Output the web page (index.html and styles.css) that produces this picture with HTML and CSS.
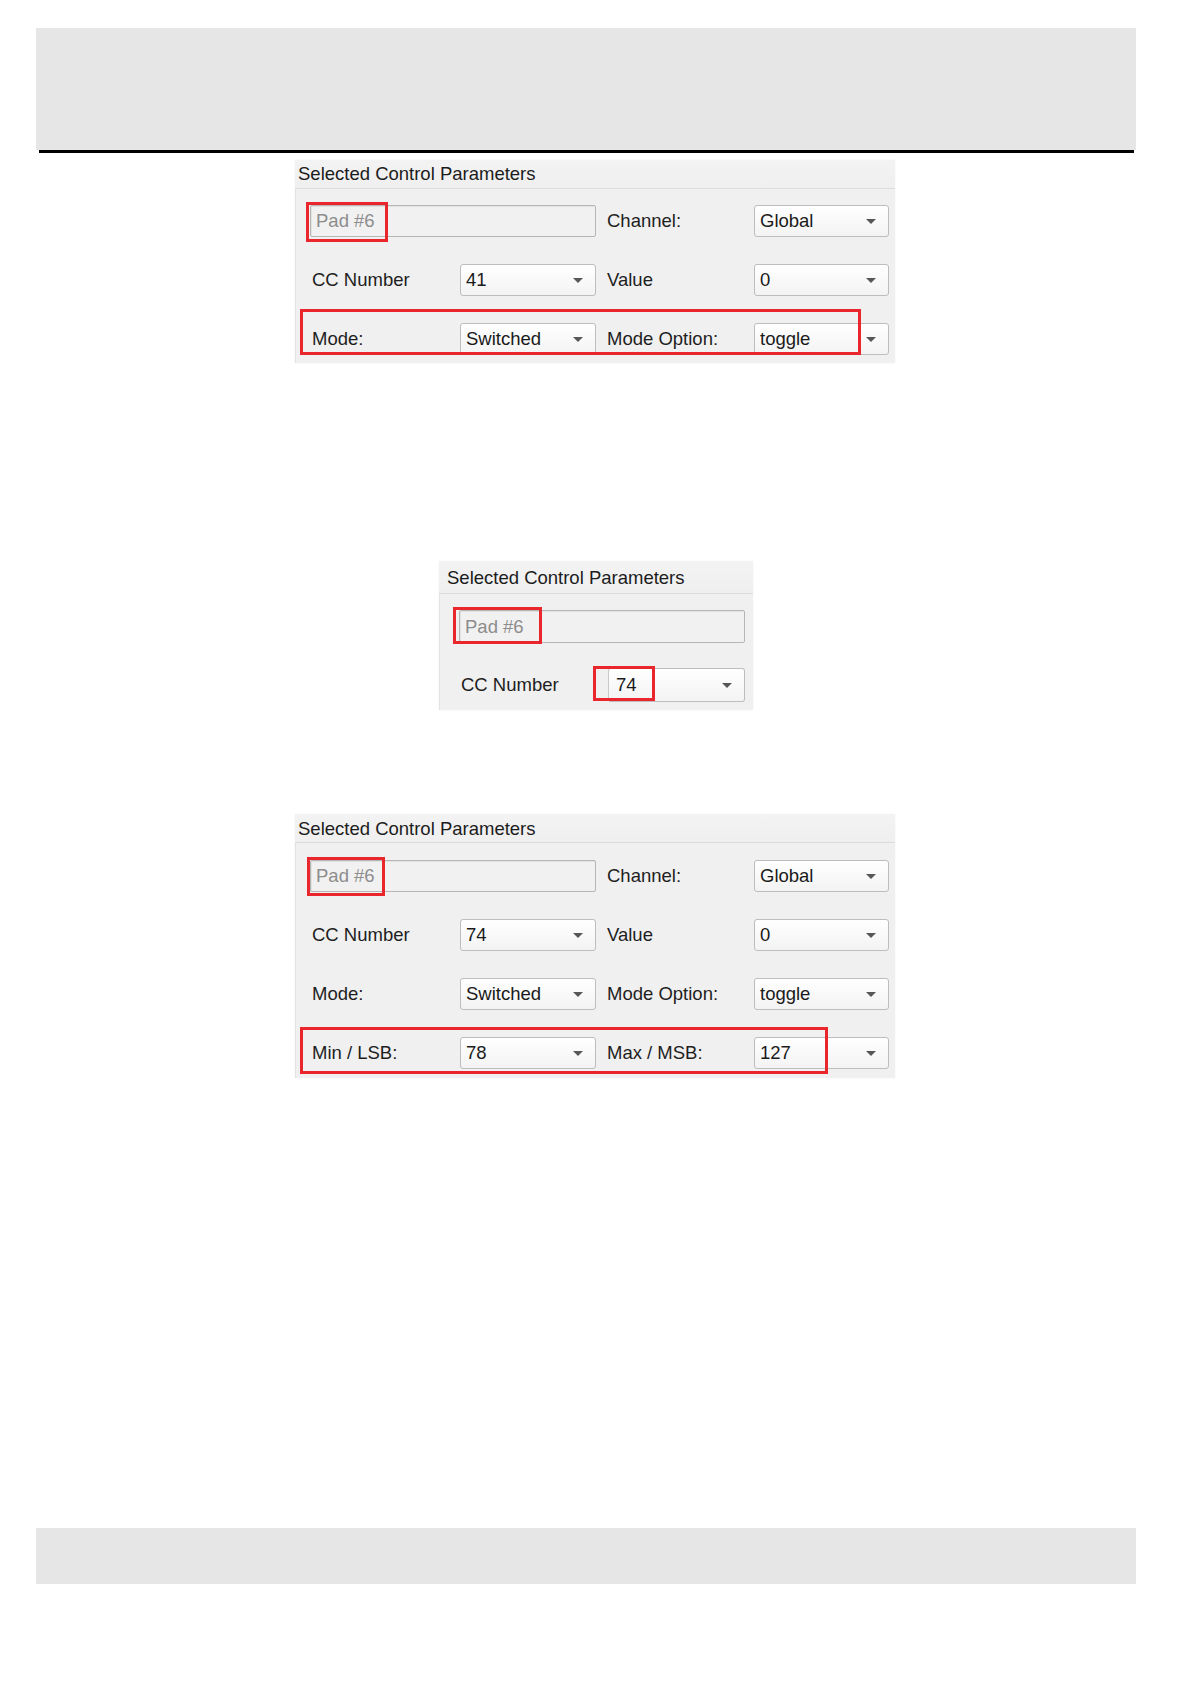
FILE: index.html
```html
<!DOCTYPE html>
<html lang="en">
<head>
<meta charset="utf-8">
<title>Selected Control Parameters</title>
<link rel="stylesheet" href="styles.css">
</head>
<body>
<div class="page">
  <div class="top-band"></div>
  <div class="rule"></div>

  <section class="panel panel-wide p1">
    <div class="panel-title">Selected Control Parameters</div>
    <div class="panel-body grid4">
      <div class="field span2">Pad #6</div>
      <div class="lbl">Channel:</div>
      <div class="select"><span>Global</span><i class="arrow"></i></div>

      <div class="lbl">CC Number</div>
      <div class="select"><span>41</span><i class="arrow"></i></div>
      <div class="lbl">Value</div>
      <div class="select"><span>0</span><i class="arrow"></i></div>

      <div class="lbl">Mode:</div>
      <div class="select"><span>Switched</span><i class="arrow"></i></div>
      <div class="lbl">Mode Option:</div>
      <div class="select"><span>toggle</span><i class="arrow"></i></div>
    </div>
    <div class="mark mark-p1-pad"></div>
    <div class="mark mark-p1-mode"></div>
  </section>

  <section class="panel panel-narrow p2">
    <div class="panel-title">Selected Control Parameters</div>
    <div class="panel-body grid2">
      <div class="field span2">Pad #6</div>
      <div class="lbl">CC Number</div>
      <div class="select select-split"><span>74</span><i class="arrow"></i></div>
    </div>
    <div class="mark mark-p2-pad"></div>
    <div class="mark mark-p2-cc"></div>
  </section>

  <section class="panel panel-wide p3">
    <div class="panel-title">Selected Control Parameters</div>
    <div class="panel-body grid4">
      <div class="field span2">Pad #6</div>
      <div class="lbl">Channel:</div>
      <div class="select"><span>Global</span><i class="arrow"></i></div>

      <div class="lbl">CC Number</div>
      <div class="select"><span>74</span><i class="arrow"></i></div>
      <div class="lbl">Value</div>
      <div class="select"><span>0</span><i class="arrow"></i></div>

      <div class="lbl">Mode:</div>
      <div class="select"><span>Switched</span><i class="arrow"></i></div>
      <div class="lbl">Mode Option:</div>
      <div class="select"><span>toggle</span><i class="arrow"></i></div>

      <div class="lbl">Min / LSB:</div>
      <div class="select"><span>78</span><i class="arrow"></i></div>
      <div class="lbl">Max / MSB:</div>
      <div class="select"><span>127</span><i class="arrow"></i></div>
    </div>
    <div class="mark mark-p3-pad"></div>
    <div class="mark mark-p3-min"></div>
  </section>

  <div class="bottom-band"></div>
</div>
</body>
</html>
```

FILE: styles.css
```css
html, body {
  margin: 0;
  padding: 0;
  background: #ffffff;
}

.page {
  width: 1191px;
  min-height: 1684px;
  font-family: "Liberation Sans", Arial, sans-serif;
  color: #1e1e1e;
  overflow: hidden;
}

.top-band {
  margin: 28px 0 0 36px;
  width: 1100px;
  height: 122px;
  background: #e6e6e6;
}

.rule {
  margin-left: 39px;
  width: 1095px;
  height: 3px;
  background: #000;
}

.bottom-band {
  margin: 450px 0 0 36px;
  width: 1100px;
  height: 56px;
  background: #e6e6e6;
}

/* ---------- panel ---------- */
.panel {
  position: relative;
  background: #f0f0f0;
  box-shadow: 0 0 2px rgba(0, 0, 0, 0.06);
  font-size: 18.5px;
}

.panel-wide { margin-left: 295px; width: 600px; }
.p1 { margin-top: 7px; }
.p3 { margin-top: 104px; }

.panel-narrow { margin: 198px 0 0 439px; width: 314px; }

.panel-title {
  height: 28px;
  line-height: 28px;
  padding-left: 3px;
  color: #1c1c1c;
  white-space: nowrap;
  background: linear-gradient(#f3f3f3, #efefef);
}
.p3 .panel-title {
  height: 27px;
  padding-top: 1px;
}
.panel-narrow .panel-title {
  height: 30px;
  line-height: 30px;
  padding: 2px 0 0 8px;
}

.panel-body {
  border-top: 1px solid #dcdcdc;
  border-left: 1px solid #e3e3e3;
  display: grid;
  grid-auto-rows: 32px;
  row-gap: 27px;
  column-gap: 9px;
}

.grid4 {
  grid-template-columns: 141px 136px 140px 135px;
  padding: 16px 6px 8px 14px;
}
.p3 .grid4 {
  padding-top: 17px;
  padding-bottom: 9px;
}

.grid2 {
  grid-template-columns: 140px 137px;
  grid-template-rows: 33px 34px;
  row-gap: 25px;
  padding: 16px 8px 8px 19px;
}

.span2 { grid-column: span 2; }

.lbl {
  display: flex;
  align-items: center;
  padding-left: 2px;
  white-space: nowrap;
}

.field {
  display: flex;
  align-items: center;
  padding-left: 5px;
  border: 1px solid #b6b6b6;
  border-radius: 2px;
  background: #f1f1f1;
  color: #8d8d8d;
  box-shadow: inset 1px 1px 0 #e2e2e2;
}

.select {
  display: flex;
  align-items: center;
  justify-content: space-between;
  padding: 0 12px 0 5px;
  border: 1px solid #bdbdbd;
  border-radius: 3px;
  background: linear-gradient(#ffffff, #f3f3f3);
  color: #1a1a1a;
  white-space: nowrap;
}

.select-split {
  border-left-color: #c8c8c8;
  padding-left: 7px;
}

.arrow {
  width: 0;
  height: 0;
  border-left: 5px solid transparent;
  border-right: 5px solid transparent;
  border-top: 5px solid #575757;
}

/* ---------- red highlight boxes ---------- */
.mark {
  position: absolute;
  box-sizing: border-box;
  border: 3px solid #e8262c;
}

.mark-p1-pad  { left: 11px;  top: 42px;  width: 82px;  height: 40px; }
.mark-p1-mode { left: 5px;   top: 149px; width: 561px; height: 46px; }

.mark-p2-pad  { left: 14px;  top: 46px;  width: 89px;  height: 37px; }
.mark-p2-cc   { left: 154px; top: 105px; width: 62px;  height: 35px; }

.mark-p3-pad  { left: 12px;  top: 43px;  width: 78px;  height: 39px; }
.mark-p3-min  { left: 5px;   top: 213px; width: 528px; height: 47px; }
```
